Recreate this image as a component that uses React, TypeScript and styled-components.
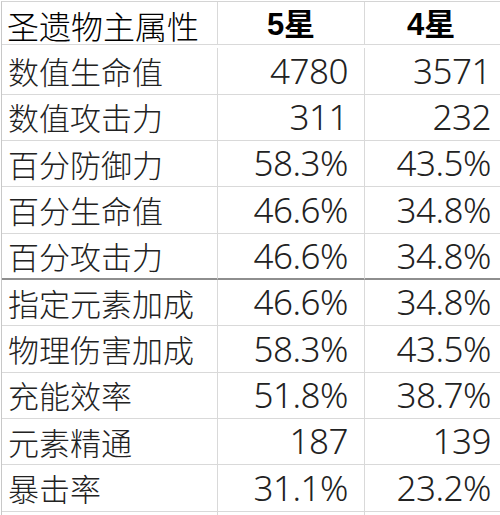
import React from "react";
import styled, { createGlobalStyle } from "styled-components";

const Global = createGlobalStyle`
  html, body { margin: 0; padding: 0; background: #ffffff; overflow: hidden; }
  body { width: 500px; height: 515px; }
`;

const Sheet = styled.div`
  padding-top: 1px;
  padding-left: 1px;
  width: 510px;
`;

const Grid = styled.div`
  display: grid;
  grid-template-columns: 216px 147px 140px;
  grid-auto-rows: 46.33px;
  border-top: 1px solid #d4d4d4;
  border-left: 1px solid #c8c8c8;
  & > :nth-child(-n + 3) {
    height: 43px;
    padding-top: 5px;
  }
`;

const Cell = styled.div<{ $align?: "left" | "right" | "center"; $sep?: boolean; $pr?: number; $pl?: number }>`
  box-sizing: border-box;
  display: flex;
  align-items: center;
  justify-content: ${(p) => (p.$align === "right" ? "flex-end" : p.$align === "center" ? "center" : "flex-start")};
  padding-left: ${(p) => p.$pl ?? 0}px;
  padding-right: ${(p) => p.$pr ?? 0}px;
  border-right: 1px solid #d9d9d9;
  border-bottom: ${(p) => (p.$sep ? "2px solid #8e8e8e" : "1px solid #d9d9d9")};
  white-space: nowrap;
`;

const HeadLabel = styled.span`
  font-family: "Noto Sans CJK SC", sans-serif;
  font-size: 32px;
  font-weight: 300;
  color: #000;
  line-height: 1.1;
`;

const HeadStar = styled.span`
  font-family: "Liberation Sans", "Noto Sans CJK SC", sans-serif;
  font-size: 31px;
  font-weight: 700;
  color: #000;
  line-height: 1.1;
`;

const Label = styled.span<{ $faint?: boolean }>`
  font-family: "Noto Sans CJK SC", sans-serif;
  font-size: 31px;
  font-weight: 300;
  color: ${(p) => (p.$faint ? "#e6dcb8" : "#222222")};
  line-height: 1.1;
  ${(p) => (p.$faint ? "margin-top: 34px;" : "")}
`;

const Num = styled.span<{ $faint?: boolean }>`
  font-family: "Noto Sans", "Open Sans", sans-serif;
  font-size: 35px;
  font-weight: 300;
  color: ${(p) => (p.$faint ? "#e6dcb8" : "#222222")};
  line-height: 1.1;
  letter-spacing: -0.5px;
  ${(p) => (p.$faint ? "margin-top: 34px;" : "")}
`;

type Row = { name: string; five: string; four: string; sep?: boolean; faint?: boolean };

const rows: Row[] = [
  { name: "数值生命值", five: "4780", four: "3571" },
  { name: "数值攻击力", five: "311", four: "232" },
  { name: "百分防御力", five: "58.3%", four: "43.5%" },
  { name: "百分生命值", five: "46.6%", four: "34.8%" },
  { name: "百分攻击力", five: "46.6%", four: "34.8%", sep: true },
  { name: "指定元素加成", five: "46.6%", four: "34.8%" },
  { name: "物理伤害加成", five: "58.3%", four: "43.5%" },
  { name: "充能效率", five: "51.8%", four: "38.7%" },
  { name: "元素精通", five: "187", four: "139" },
  { name: "暴击率", five: "31.1%", four: "23.2%" },
  { name: "暴击伤害", five: "62.2%", four: "46.6%", faint: true },
];

export default function App() {
  return (
    <>
      <Global />
      <Sheet>
        <Grid>
          <Cell $pl={5}>
            <HeadLabel>圣遗物主属性</HeadLabel>
          </Cell>
          <Cell $align="center">
            <HeadStar>5星</HeadStar>
          </Cell>
          <Cell $pl={42}>
            <HeadStar>4星</HeadStar>
          </Cell>
          {rows.map((r) => (
            <React.Fragment key={r.name}>
              <Cell $pl={6} $sep={r.sep}>
                <Label $faint={r.faint}>{r.name}</Label>
              </Cell>
              <Cell $align="right" $pr={16} $sep={r.sep}>
                <Num $faint={r.faint}>{r.five}</Num>
              </Cell>
              <Cell $align="right" $pr={13} $sep={r.sep}>
                <Num $faint={r.faint}>{r.four}</Num>
              </Cell>
            </React.Fragment>
          ))}
        </Grid>
      </Sheet>
    </>
  );
}
